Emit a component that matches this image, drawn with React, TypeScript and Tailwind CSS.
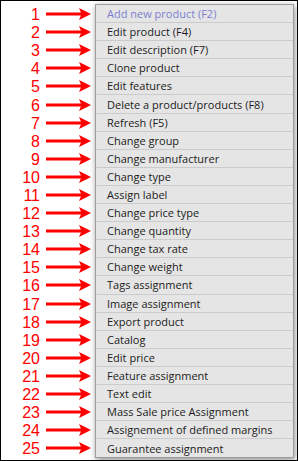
import React from 'react';

const items = [
  'Add new product (F2)',
  'Edit product (F4)',
  'Edit description (F7)',
  'Clone product',
  'Edit features',
  'Delete a product/products (F8)',
  'Refresh (F5)',
  'Change group',
  'Change manufacturer',
  'Change type',
  'Assign label',
  'Change price type',
  'Change quantity',
  'Change tax rate',
  'Change weight',
  'Tags assignment',
  'Image assignment',
  'Export product',
  'Catalog',
  'Edit price',
  'Feature assignment',
  'Text edit',
  'Mass Sale price Assignment',
  'Assignement of defined margins',
  'Guarantee assignment',
];

// red pointer arrow
function Arrow() {
  return (
    <svg width="46" height="14" viewBox="0 0 46 14">
      <rect x="0" y="5.5" width="36" height="3" fill="#ff0000" />
      <path d="M33 1 L45 7 L33 13 L35.5 7 Z" fill="#ff0000" />
    </svg>
  );
}

function App() {
  return (
    <div className="w-[298px] h-[461px] border border-black bg-white overflow-hidden">
      <div className="flex pt-[3px]">
        {/* numbers + arrows */}
        <div className="w-[93px] flex flex-col pt-[1px]">
          {items.map((_, i) => (
            <div key={i} className="h-[18.1px] flex items-center">
              <span className="w-[40px] text-right pr-[1px] text-[16px] leading-none text-[#ff0000] font-['Liberation_Sans',Arial,sans-serif] translate-y-[1px]">
                {i + 1}
              </span>
              <span className="ml-[5px]">
                <Arrow />
              </span>
            </div>
          ))}
        </div>

        {/* context menu */}
        <div className="ml-[1px] w-[199px] border border-[#9d9d9d] bg-[#e5e5e5] shadow-[1px_2px_6px_rgba(0,0,0,0.45)] font-['Open_Sans','Noto_Sans',sans-serif]">
          {items.map((t, i) => (
            <div
              key={i}
              className={`h-[18.1px] flex items-center pl-[11px] text-[11px] leading-none ${
                i === items.length - 1 ? '' : 'border-b border-[#cbcbcb]'
              } ${i === 0 ? 'text-[#7c80cf]' : 'text-[#1c1c1c]'}`}
            >
              {t}
            </div>
          ))}
        </div>
      </div>
    </div>
  );
}

export default App;
